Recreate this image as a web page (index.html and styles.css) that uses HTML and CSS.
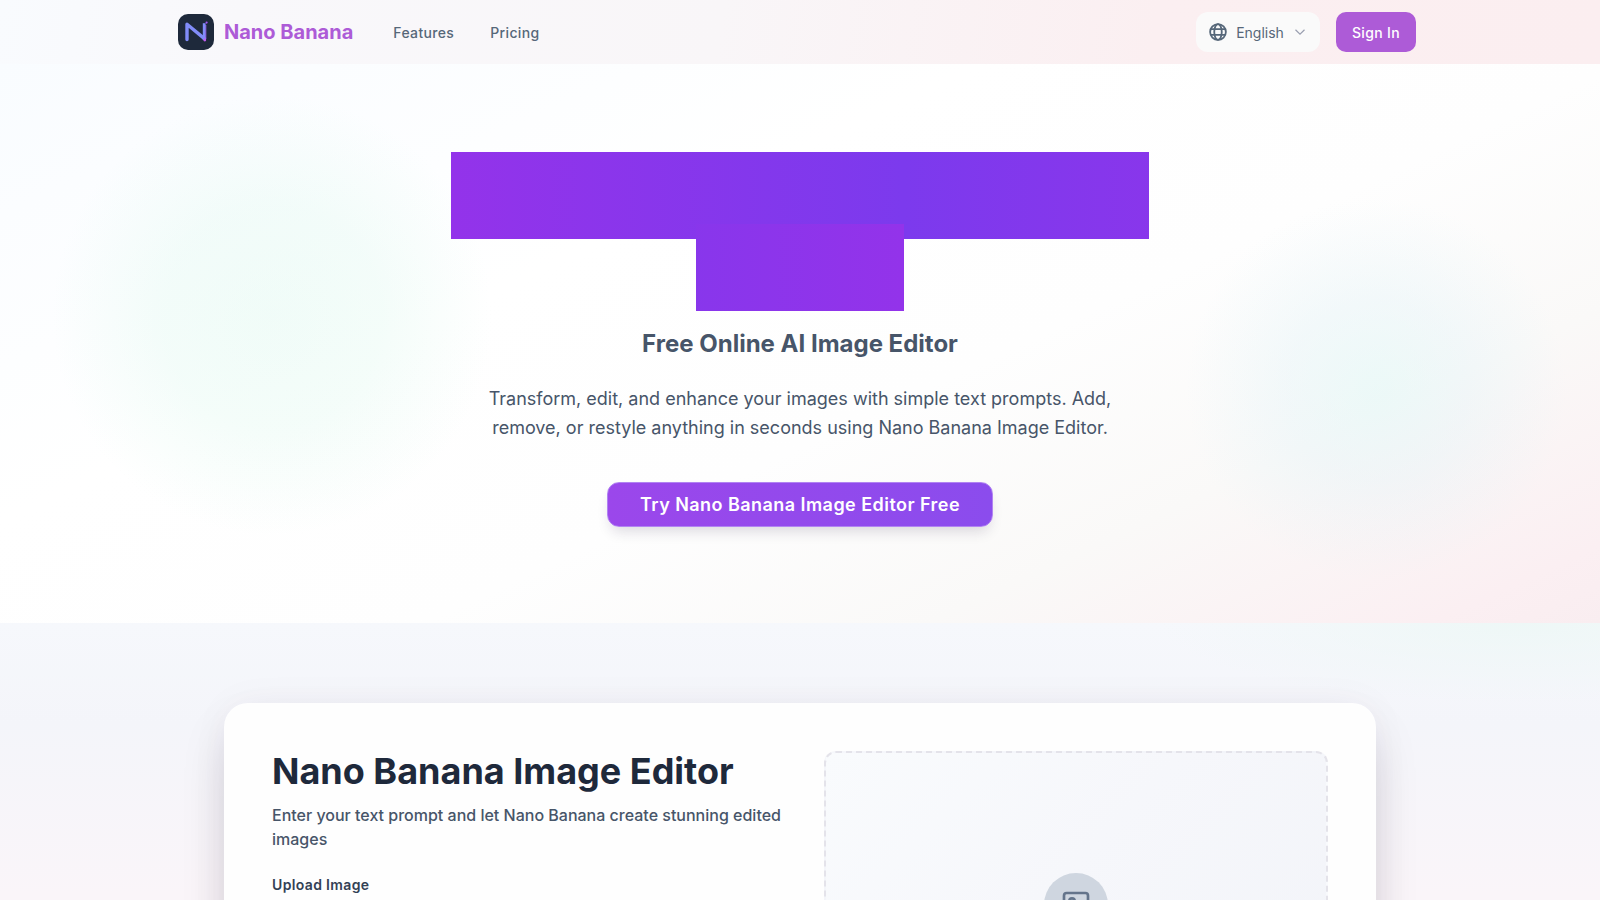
FILE: index.html
```html
<!DOCTYPE html>
<html lang="en">
<head>
    <meta charset="UTF-8">
    <meta name="viewport" content="width=device-width, initial-scale=1.0">
    <title>Nano Banana - Free Online AI Image Editor</title>
    <link rel="stylesheet" href="styles.css">
</head>
<body>
    <!-- Header -->
    <header class="header">
        <div class="header-inner">
            <a href="#" class="brand">
                <svg class="brand-logo" viewBox="0 0 36 36" aria-hidden="true">
                    <rect width="36" height="36" rx="10" fill="#1e293b"/>
                    <path d="M9 25.5V10.3L26.4 24.6" fill="none" stroke="#818cf8" stroke-width="3.4" stroke-linecap="round" stroke-linejoin="round"/>
                    <path d="M26.2 9.2V26" fill="none" stroke="#818cf8" stroke-width="2.8"/>
                    <path d="M27.8 11V25" stroke="#a06bf8" stroke-width="0.9"/>
                    <circle cx="26.8" cy="26" r="1.4" fill="#c05cf0"/>
                    <circle cx="28.6" cy="8.6" r="1.1" fill="#a855f7"/>
                </svg>
                <span>Nano Banana</span>
            </a>
            <nav class="nav">
                <a href="#features">Features</a>
                <a href="#pricing">Pricing</a>
            </nav>
            <div class="header-actions">
                <button type="button" class="btn-lang">
                    <svg class="icon-globe" viewBox="0 0 24 24" aria-hidden="true">
                        <circle cx="12" cy="12" r="10.5"/>
                        <ellipse cx="12" cy="12" rx="5" ry="10.5"/>
                        <path d="M2.4 8.2h19.2M2.4 15.8h19.2"/>
                    </svg>
                    <span>English</span>
                    <svg class="icon-chevron" viewBox="0 0 24 24" aria-hidden="true">
                        <path d="M3 7.5l9 9 9-9"/>
                    </svg>
                </button>
                <button type="button" class="btn-signin">Sign In</button>
            </div>
        </div>
    </header>

    <main>
        <!-- Hero -->
        <section class="hero">
            <h1 class="hero-title"><span>Nano Banana Image Editor</span></h1>
            <h2 class="hero-subtitle">Free Online AI Image Editor</h2>
            <p class="hero-text">Transform, edit, and enhance your images with simple text prompts. Add, remove, or restyle anything in seconds using Nano Banana Image Editor.</p>
            <a href="#editor" class="btn-cta">Try Nano Banana Image Editor Free</a>
        </section>

        <!-- Editor -->
        <section class="editor" id="editor">
            <div class="editor-card">
                <div class="editor-form">
                    <h2>Nano Banana Image Editor</h2>
                    <p>Enter your text prompt and let Nano Banana create stunning edited images</p>
                    <h3>Upload Image</h3>
                </div>
                <div class="preview">
                    <div class="preview-icon">
                        <svg viewBox="0 0 24 24" aria-hidden="true">
                            <rect x="3" y="3" width="18" height="18" rx="2"/>
                            <circle cx="9" cy="9" r="2"/>
                            <path d="M21 15l-3.1-3.1a2 2 0 0 0-2.8 0L6 21"/>
                        </svg>
                    </div>
                </div>
            </div>
        </section>
    </main>
</body>
</html>
```

FILE: styles.css
```css
* {
    margin: 0;
    padding: 0;
    box-sizing: border-box;
}

body {
    font-family: Inter, "Liberation Sans", sans-serif;
    color: #475569;
    background: #f6f7fb;
    line-height: 1.5;
}

a {
    color: inherit;
    text-decoration: none;
}

button {
    font: inherit;
    border: 0;
    cursor: pointer;
}

/* Header */
.header {
    background: linear-gradient(100deg, #f9fbfe 0%, #f9f8fb 15%, #f9f6f8 45%, #fbeff1 72%, #fbeef0 100%);
}

.header-inner {
    display: flex;
    align-items: center;
    max-width: 1280px;
    height: 64px;
    margin: 0 auto;
    padding: 0 24px 0 18px;
}

.brand {
    display: flex;
    align-items: center;
    gap: 10px;
    font-size: 20px;
    font-weight: 700;
    color: #ad5bd7;
}

.brand-logo {
    width: 36px;
    height: 36px;
}

.nav {
    display: flex;
    gap: 36px;
    margin-left: 40px;
    font-size: 14px;
    font-weight: 500;
    letter-spacing: 0.025em;
    color: #566779;
}

.header-actions {
    display: flex;
    gap: 16px;
    margin-left: auto;
    font-size: 14px;
}

.btn-lang {
    display: flex;
    align-items: center;
    gap: 8px;
    height: 40px;
    padding: 0 12px;
    border-radius: 12px;
    background: #fafafa;
    color: #566779;
}

.icon-globe,
.icon-chevron {
    fill: none;
    stroke: currentColor;
    stroke-width: 2.4;
}

.icon-globe {
    width: 20px;
    height: 20px;
    padding: 1px;
}

.icon-chevron {
    width: 16px;
    height: 16px;
    padding: 2px;
    color: #9a9fb0;
}

.btn-signin {
    height: 40px;
    padding: 0 16px;
    border-radius: 10px;
    background: #ad5bd7;
    color: #fff;
    font-weight: 500;
    letter-spacing: 0.025em;
}

/* Hero */
.hero {
    display: flex;
    flex-direction: column;
    align-items: center;
    padding: 96px 24px;
    text-align: center;
    background:
        radial-gradient(circle at 17% 45%, rgba(209, 246, 232, 0.3) 0, rgba(209, 246, 232, 0.24) 110px, rgba(224, 250, 240, 0) 220px),
        radial-gradient(circle at 86% 58%, rgba(214, 248, 246, 0.4) 0, rgba(220, 242, 248, 0.3) 90px, rgba(228, 244, 248, 0) 190px),
        linear-gradient(155deg, #f9fcff 0%, #fff 35%, #fefefe 58%, #faf9f8 76%, #fbeff2 94%, #f9edf0 100%);
}

.hero-title {
    max-width: 896px;
    font-size: 72px;
    font-weight: 700;
    line-height: 72px;
}

.hero-title span {
    background: linear-gradient(90deg, #9333ea, #7c3aed, #9333ea);
    color: transparent;
}

.hero-subtitle {
    margin-top: 24px;
    font-size: 24px;
    font-weight: 700;
    line-height: 32px;
}

.hero-text {
    max-width: 640px;
    margin-top: 24px;
    font-size: 18px;
    line-height: 29px;
}

.btn-cta {
    margin-top: 40px;
    padding: 8px 32px;
    border: 1px solid #b183f2;
    border-radius: 12px;
    background: linear-gradient(90deg, #9b47eb, #8b4ced) border-box;
    box-shadow: 0 8px 14px -4px rgba(30, 20, 60, 0.16);
    color: #fff;
    font-size: 18px;
    font-weight: 600;
    line-height: 27px;
    letter-spacing: 0.025em;
}

/* Editor */
.editor {
    padding: 80px 24px;
    background:
        radial-gradient(ellipse 360px 80px at 95% 0, rgba(236, 247, 245, 0.8) 0, rgba(236, 247, 245, 0) 100%),
        linear-gradient(to bottom, #f6f8fc 0, #f4f5fa 100px, #faf5f9 270px);
}

.editor-card {
    display: grid;
    grid-template-columns: 1.03fr 1fr;
    gap: 32px;
    max-width: 1152px;
    margin: 0 auto;
    padding: 48px;
    border-radius: 24px;
    background: #fefefe;
    box-shadow: 0 25px 50px -12px rgba(20, 20, 40, 0.25), 0 0 40px rgba(100, 60, 80, 0.04);
}

.editor-form h2 {
    color: #1e293b;
    font-size: 36px;
    font-weight: 700;
    line-height: 40px;
}

.editor-form p {
    margin-top: 12px;
    font-size: 16px;
    font-weight: 500;
    line-height: 24px;
}

.editor-form h3 {
    margin-top: 24px;
    color: #334155;
    font-size: 14px;
    font-weight: 600;
    line-height: 20px;
    letter-spacing: 0.025em;
}

.preview {
    display: flex;
    justify-content: center;
    min-height: 400px;
    padding-top: 120px;
    border: 2px dashed #e4e3ea;
    border-radius: 12px;
    background: linear-gradient(135deg, #f9fbfd 0%, #f6f7fb 40%, #f1f3f8 100%);
}

.preview-icon {
    width: 64px;
    height: 64px;
    padding: 16px;
    border-radius: 50%;
    background: #cfd6e0;
}

.preview-icon svg {
    display: block;
    fill: none;
    stroke: #64748b;
    stroke-width: 2;
    stroke-linecap: round;
    stroke-linejoin: round;
}
```
